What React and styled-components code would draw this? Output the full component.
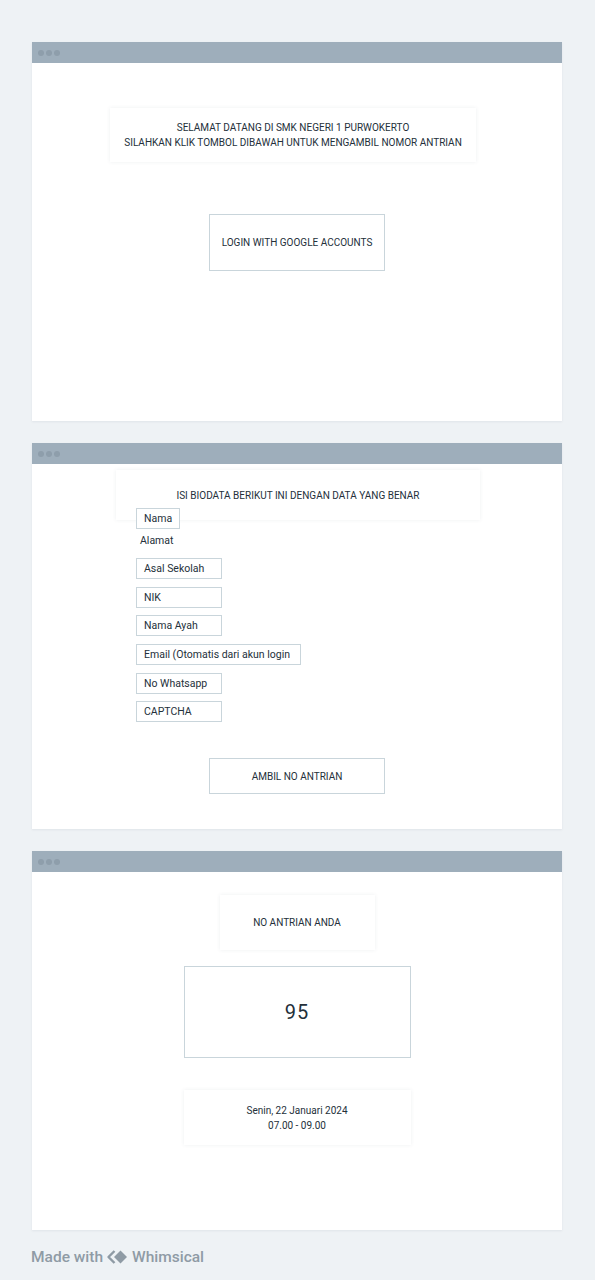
import React from 'react';
import styled, {createGlobalStyle} from 'styled-components';

const GlobalStyle = createGlobalStyle`
    body {
        margin: 0;
        background: #eef2f5;
        font-family: Roboto, "Noto Sans", sans-serif;
        color: #24303a;
    }
`;

const Page = styled.div`
    padding: 42px 0 0 32px;
    min-height: 1280px;
    box-sizing: border-box;
`;

const Window = styled.section`
    width: 530px;
    background: #fff;
    margin-bottom: 22px;
    box-shadow: 0 1px 2px rgba(60, 80, 100, 0.08);
`;

const TitleBar = styled.div`
    height: 21px;
    background: #9eaebb;
    display: flex;
    align-items: center;
    gap: 2px;
    padding-left: 6px;
`;

const Dot = styled.span`
    width: 6px;
    height: 6px;
    border-radius: 50%;
    background: #8e9eab;
`;

const Body = styled.div`
    height: ${p => p.height}px;
    display: flex;
    flex-direction: column;
    align-items: center;
    padding-top: ${p => p.top || 0}px;
    box-sizing: border-box;
`;

const Card = styled.div`
    width: ${p => p.width}px;
    height: ${p => p.height}px;
    margin-left: ${p => p.shift || 0}px;
    margin-top: ${p => p.gap || 0}px;
    background: #fff;
    box-shadow: 0 0 4px rgba(40, 60, 80, 0.08);
    display: flex;
    flex-direction: column;
    align-items: center;
    justify-content: center;
    font-size: 10px;
    line-height: 15px;
    text-align: center;
    text-transform: ${p => p.plain ? 'none' : 'uppercase'};
`;

const Button = styled.div`
    width: 176px;
    height: ${p => p.height}px;
    margin-top: ${p => p.gap}px;
    box-sizing: border-box;
    border: 1px solid #c9d5db;
    display: flex;
    align-items: center;
    justify-content: center;
    font-size: 10px;
    text-transform: uppercase;
`;

const NumberBox = styled.div`
    width: 227px;
    height: 92px;
    margin-top: 16px;
    box-sizing: border-box;
    border: 1px solid #c9d5db;
    display: flex;
    align-items: center;
    justify-content: center;
    font-size: 20px;
    letter-spacing: 1px;
`;

const Form = styled.div`
    align-self: stretch;
    padding-left: 104px;
    margin-top: -12px;
    display: flex;
    flex-direction: column;
    align-items: flex-start;
    gap: 7.6px;
`;

const Field = styled.div`
    height: 21px;
    box-sizing: border-box;
    min-width: ${p => p.width || 86}px;
    padding: 0 7px;
    border: 1px solid #c9d5db;
    background: #fff;
    display: flex;
    align-items: center;
    font-size: 10.5px;
`;

const Label = styled.div`
    height: 16px;
    margin: -4px 0 2px;
    padding-left: 4px;
    display: flex;
    align-items: center;
    font-size: 10.5px;
`;

// the last window's 22px bottom margin collapses with this one
const Footer = styled.div`
    margin: -4px 0 0 -1px;
    display: flex;
    align-items: center;
    gap: 3px;
    color: #8f9ba5;
    font-size: 15.5px;
    font-weight: 500;
`;

function Bar() {
    return (
        <TitleBar>
            <Dot/><Dot/><Dot/>
        </TitleBar>
    );
}

function WhimsicalLogo() {
    return (
        <svg width="23" height="16" viewBox="0 0 23 16">
            <path d="M8.5 2 L2.5 8 L8.5 14" fill="none" stroke="#8f9ba5" strokeWidth="2.4" strokeLinejoin="round"/>
            <path d="M14.5 1.5 L21 8 L14.5 14.5 L8 8 Z" fill="#8f9ba5"/>
        </svg>
    );
}

const fields = [
    {label: 'Asal Sekolah'},
    {label: 'NIK'},
    {label: 'Nama Ayah'},
    {label: 'Email (Otomatis dari akun login', width: 165},
    {label: 'No Whatsapp'},
    {label: 'CAPTCHA'},
];

export default function App() {
    return (
        <>
            <GlobalStyle/>
            <Page>
                <Window>
                    <Bar/>
                    <Body height={358} top={45}>
                        <Card width={366} height={54} shift={-8}>
                            <div>Selamat datang di SMK Negeri 1 Purwokerto</div>
                            <div>Silahkan klik tombol dibawah untuk mengambil nomor antrian</div>
                        </Card>
                        <Button height={57} gap={52}>Login with google accounts</Button>
                    </Body>
                </Window>
                <Window>
                    <Bar/>
                    <Body height={365} top={6}>
                        <Card width={364} height={50} shift={2}>
                            <div>Isi biodata berikut ini dengan data yang benar</div>
                        </Card>
                        <Form>
                            <Field width={43}>Nama</Field>
                            <Label>Alamat</Label>
                            {fields.map(f => (
                                <Field key={f.label} width={f.width}>{f.label}</Field>
                            ))}
                        </Form>
                        <Button height={36} gap={36}>Ambil no antrian</Button>
                    </Body>
                </Window>
                <Window>
                    <Bar/>
                    <Body height={358} top={23}>
                        <Card width={155} height={55}>
                            <div>No antrian anda</div>
                        </Card>
                        <NumberBox>95</NumberBox>
                        <Card width={227} height={55} gap={32} plain>
                            <div>Senin, 22 Januari 2024</div>
                            <div>07.00 - 09.00</div>
                        </Card>
                    </Body>
                </Window>
                <Footer>
                    Made with
                    <WhimsicalLogo/>
                    <span>Whimsical</span>
                </Footer>
            </Page>
        </>
    );
}
